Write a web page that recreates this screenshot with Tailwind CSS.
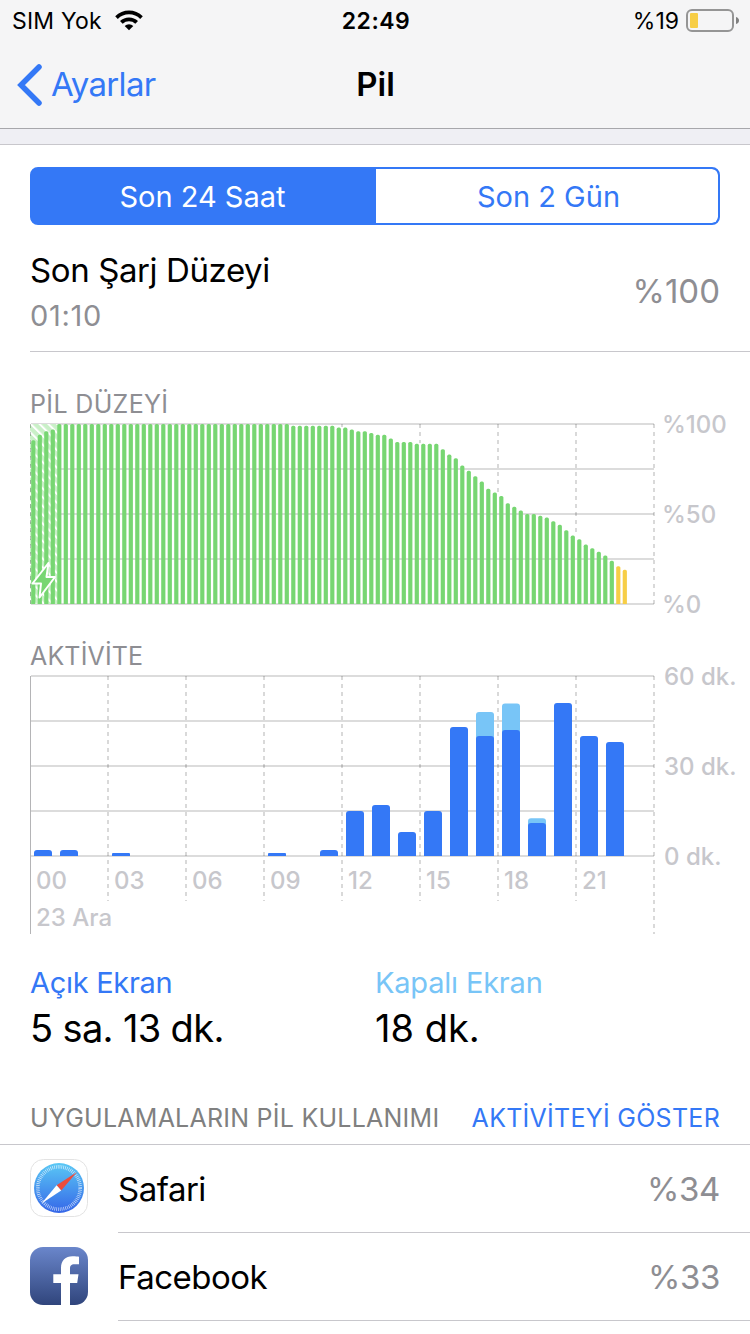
<!DOCTYPE html>
<html lang="tr">
<head>
  <meta charset="UTF-8">
  <meta name="viewport" content="width=device-width, initial-scale=1.0">
  <title>Pil</title>
  <script src="https://cdn.jsdelivr.net/npm/@tailwindcss/browser@4"></script>
</head>
<body class="bg-white text-black font-['Inter',sans-serif] w-[750px] h-[1334px] overflow-hidden whitespace-nowrap">
  <header class="h-[129px] bg-[#f5f5f6] border-b border-[#a7a7ab]">
    <div class="h-10 flex items-center justify-between pl-3 pr-[10px] pt-[2px] text-[23px] leading-10">
      <div class="flex-1 flex items-center">
        <span class="tracking-[0.2px]">SIM Yok</span>
        <svg class="ml-[13px] -mt-[2px]" width="28" height="21" viewBox="0 0 28 21">
          <path d="M0.2 6.2A19.8 19.8 0 0 1 27.8 6.2L25.2 8.9A16.1 16.1 0 0 0 2.8 8.9Z"/>
          <path d="M5 11.1A13 13 0 0 1 23 11.1L20.3 13.8A9.2 9.2 0 0 0 7.7 13.8Z"/>
          <path d="M9.7 15.9A6.2 6.2 0 0 1 18.3 15.9L14 20.2Z"/>
        </svg>
      </div>
      <span class="font-semibold tracking-[0.5px]">22:49</span>
      <div class="flex-1 flex items-center justify-end">
        <span>%19</span>
        <svg class="ml-[7px]" width="54" height="24" viewBox="0 0 54 24">
          <rect x="1" y="1" width="46" height="21" rx="5" fill="none" stroke="#959595" stroke-width="2"/>
          <rect x="4" y="4" width="8" height="15" rx="1" fill="#f7ce46"/>
          <path d="M50 8Q53 9 53 11.5T50 15Z" fill="#808080"/>
        </svg>
      </div>
    </div>
    <div class="h-[89px] grid grid-cols-3 items-center text-[33px]">
      <a class="flex items-center text-[#3478f6] pl-[17px]">
        <svg width="26" height="42" viewBox="0 0 26 42"><path d="M22 3L4 21L22 39" fill="none" stroke="#3478f6" stroke-width="5.5" stroke-linecap="round" stroke-linejoin="miter"/></svg>
        <span class="ml-2 pt-px tracking-[-0.7px]">Ayarlar</span>
      </a>
      <h1 class="text-center font-semibold pt-px pl-px">Pil</h1>
    </div>
  </header>
  <div class="h-4 bg-[#efeff4] border-b border-[#c8c7cc]"></div>

  <main>
    <div class="mx-[30px] mt-[22px] h-[58px] flex rounded-lg border-2 border-[#3478f6] bg-[#3478f6] overflow-hidden text-[29px] leading-[55px] text-center">
      <div class="w-[344px] pr-[3px] text-white">Son 24 Saat</div>
      <div class="flex-1 pl-[3px] bg-white rounded-r-md text-[#3478f6]">Son 2 Gün</div>
    </div>

    <div class="ml-[30px] pr-[30px] h-[127px] border-b border-[#c8c7cc] flex items-center justify-between pt-2">
      <div>
        <div class="text-[33px] leading-[46px] tracking-[-0.4px]">Son Şarj Düzeyi</div>
        <div class="text-[29px] leading-[45px] tracking-[0.7px] text-[#8e8e93]">01:10</div>
      </div>
      <div class="text-[33px] text-[#8e8e93]">%100</div>
    </div>

    <h2 class="ml-[30px] mt-[36px] text-[25px] leading-8 tracking-[0.35px] text-[#8e8e93]">PİL DÜZEYİ</h2>
    <div class="ml-[30px] mt-[3px] flex h-[183px]">
      <svg id="level" width="626" height="184" viewBox="30 423 626 184"></svg>
      <div class="ml-[6px] -mt-[13px] h-[210px] flex flex-col justify-between text-[24px] leading-[30px] font-medium text-[#c7c7cc]">
        <span>%100</span><span>%50</span><span>%0</span>
      </div>
    </div>

    <h2 class="ml-[30px] mt-[34px] text-[25px] leading-8 tracking-[0.15px] text-[#8e8e93]">AKTİVİTE</h2>
    <div class="ml-[30px] mt-[3px] flex h-[260px]">
      <div class="grid w-[626px]">
        <svg id="activity" class="col-start-1 row-start-1" width="626" height="260" viewBox="30 675 626 260"></svg>
        <div class="col-start-1 row-start-1 pt-[190px] pl-[6px] text-[24px] leading-8 font-medium text-[#c7c7cc]">
          <div class="grid grid-cols-[repeat(8,78px)]">
            <span>00</span><span>03</span><span>06</span><span>09</span><span>12</span><span>15</span><span>18</span><span>21</span>
          </div>
          <div class="mt-[5px]">23 Ara</div>
        </div>
      </div>
      <div class="ml-2 -mt-[13px] h-[210px] flex flex-col justify-between text-[24px] leading-[30px] font-medium text-[#c7c7cc]">
        <span>60 dk.</span><span>30 dk.</span><span>0 dk.</span>
      </div>
    </div>

    <div class="mx-[30px] mt-[28px] grid grid-cols-2">
      <div>
        <div class="text-[29px] leading-10 tracking-[-0.3px] text-[#3478f6]">Açık Ekran</div>
        <div class="text-[38px] leading-[50px] tracking-[-0.65px]">5 sa. 13 dk.</div>
      </div>
      <div>
        <div class="text-[29px] leading-10 tracking-[-0.2px] text-[#78c5f7]">Kapalı Ekran</div>
        <div class="text-[38px] leading-[50px]">18 dk.</div>
      </div>
    </div>

    <div class="pl-[30px] pr-[30px] pt-[49px] pb-[10px] flex justify-between text-[25px] leading-8 border-b border-[#c8c7cc]">
      <span class="tracking-[0.24px] text-[#808080]">UYGULAMALARIN PİL KULLANIMI</span>
      <a class="tracking-[0.27px] text-[#3478f6]">AKTİVİTEYİ GÖSTER</a>
    </div>

    <ul class="text-[33px]">
      <li class="flex items-center h-[88px] pl-[30px]">
        <svg class="-mt-[2px]" width="58" height="58" viewBox="0 0 58 58">
          <defs>
            <linearGradient id="sky" x2="0" y2="1"><stop stop-color="#5ac8f5"/><stop offset="1" stop-color="#3566e8"/></linearGradient>
          </defs>
          <rect x="0.5" y="0.5" width="57" height="57" rx="13" fill="#fff" stroke="#e3e3e3"/>
          <circle cx="29" cy="29" r="25" fill="url(#sky)"/>
          <circle cx="29" cy="29" r="21.2" fill="none" stroke="#fff" stroke-opacity=".7" stroke-width="3.6" stroke-dasharray=".75 1.1"/>
          <path d="M47 13L26.6 26.2L31.2 31.4Z" fill="#eb4d3d"/>
          <path d="M11.5 44.5L26.6 26.2L31.2 31.4Z" fill="#fff"/>
        </svg>
        <div class="ml-[30px] flex-1 h-full pt-[2px] border-b border-[#c8c7cc] flex items-center justify-between pr-[30px]">
          <span class="tracking-[-0.5px]">Safari</span><span class="tracking-[-0.4px] text-[#8e8e93]">%34</span>
        </div>
      </li>
      <li class="flex items-center h-[88px] pl-[30px]">
        <svg class="-mt-[2px]" width="58" height="58" viewBox="0 0 58 58">
          <defs>
            <linearGradient id="fb" x2="0" y2="1"><stop stop-color="#6a86cb"/><stop offset="1" stop-color="#30457c"/></linearGradient>
          </defs>
          <rect width="58" height="58" rx="13" fill="url(#fb)"/>
          <path d="M31 58V36H23.3V27.3H31V21C31 13.5 35.5 9.3 42.5 9.3C45.5 9.3 48 9.5 49 9.7V17.3H44.5C41 17.3 40 19 40 21.7V27.3H48.5L47.2 36H40V58Z" fill="#fff"/>
        </svg>
        <div class="ml-[30px] flex-1 h-full pt-[2px] border-b border-[#c8c7cc] flex items-center justify-between pr-[30px]">
          <span class="tracking-[-0.5px]">Facebook</span><span class="tracking-[-0.4px] text-[#8e8e93]">%33</span>
        </div>
      </li>
    </ul>
  </main>

  <script>
    // battery level, one value per 15 minutes
    var levels = [91, 94, 96, 97].concat(Array(36).fill(100), Array(7).fill(99), [
      98, 98, 97, 96, 96, 95, 94, 94, 92, 90, 90, 90, 89, 89, 89, 89, 86, 83, 81, 77, 74, 71, 68, 64,
      62, 60, 56, 54, 52, 50, 50, 49, 48, 46, 44, 41, 38, 36, 33, 31, 29, 27, 24, 21, 19
    ]);
    // minutes per hour: [hour, screen on, screen off]
    var usage = [
      [0, 2, 0], [1, 2, 0], [3, 1, 0], [9, 1, 0], [11, 2, 0], [12, 15, 0], [13, 17, 0], [14, 8, 0],
      [15, 15, 0], [16, 43, 0], [17, 40, 8], [18, 42, 8.8], [19, 11, 1.6], [20, 51, 0], [21, 40, 0], [22, 38, 0]
    ];

    function rows(top) {
      var s = '';
      for (var i = 0; i < 5; i++) {
        s += '<rect x="31" y="' + (top - 1 + i * 45) + '" width="623" height="2" fill="#dcdcdc"/>';
      }
      return s;
    }
    function dashed(x, y1, y2) {
      return '<path d="M' + x + ' ' + y1 + 'V' + y2 + '" stroke="#000" stroke-opacity=".15" stroke-width="2" stroke-dasharray="4 4"/>';
    }
    function bar(x, y, w, bottom, r, color) {
      return '<path d="M' + x + ' ' + bottom + 'V' + (y + r) + 'q0 ' + -r + ' ' + r + ' ' + -r + 'h' + (w - 2 * r) +
        'q' + r + ' 0 ' + r + ' ' + r + 'V' + bottom + 'z" fill="' + color + '"/>';
    }

    var s = '<defs><pattern id="hatch" width="6.2" height="6.2" patternUnits="userSpaceOnUse" patternTransform="rotate(-45)">' +
      '<rect width="6.2" height="6.2" fill="#c9f0c7"/><rect width="2" height="6.2" fill="#fff"/></pattern></defs>';
    s += rows(424);
    s += dashed(342, 424, 427) + dashed(420, 424, 443) + dashed(498, 424, 493) + dashed(576, 424, 534) + dashed(654, 424, 604);
    s += '<rect x="30" y="424" width="27.5" height="180" fill="url(#hatch)"/>';
    s += '<path d="M30.5 424V604" stroke="#000" stroke-opacity=".25" stroke-dasharray="4 4"/>';
    levels.forEach(function (v, i) {
      s += bar(31.2 + i * 6.5, 604 - v * 1.8, 4.2, 604, 1.6, v > 21 ? '#77d672' : '#f7ce46');
    });
    s += '<path d="M48.5 563L32.5 583.5H41L39.5 597.5L55 577H46.5Z" fill="#77d672" stroke="#fff" stroke-width="2" stroke-linejoin="round"/>';
    document.getElementById('level').innerHTML = s;

    s = rows(676);
    for (var h = 1; h < 8; h++) s += dashed(30 + h * 78, 676, 901);
    s += dashed(654, 676, 934);
    s += '<path d="M30.5 676V934" stroke="#b4b4b6"/>';
    usage.forEach(function (u) {
      var x = 34 + u[0] * 26;
      if (u[2]) s += bar(x, 856 - (u[1] + u[2]) * 3, 18, 856, 3, '#78c5f7');
      s += bar(x, 856 - u[1] * 3, 18, 856, u[1] < 2 ? 1 : 3, '#3478f6');
    });
    document.getElementById('activity').innerHTML = s;
  </script>
</body>
</html>
